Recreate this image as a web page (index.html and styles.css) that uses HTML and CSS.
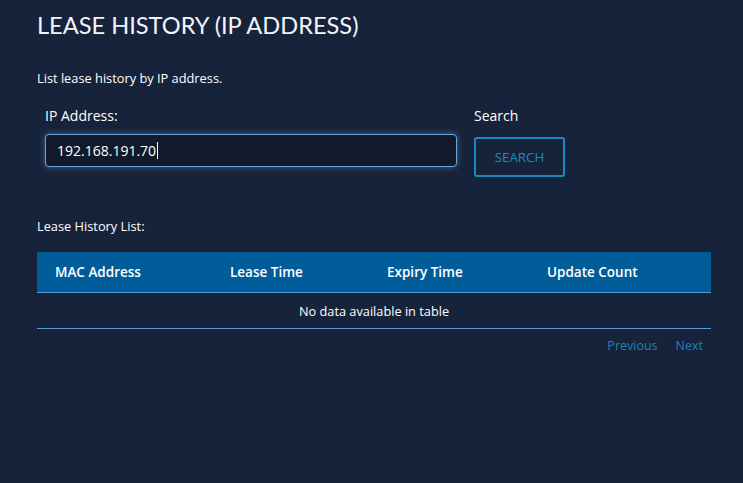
FILE: index.html
```html
<!DOCTYPE html>
<html>
<head>
<meta charset="utf-8">
<link rel="stylesheet" href="styles.css">
</head>
<body>
<div class="page">
  <h1 class="title">LEASE HISTORY (IP ADDRESS)</h1>
  <p class="desc">List lease history by IP address.</p>
  <div class="form-row">
    <div class="group group-ip">
      <label class="label">IP Address:</label>
      <div class="input">192.168.191.70<span class="caret"></span></div>
    </div>
    <div class="group group-search">
      <label class="label">Search</label>
      <button class="btn">SEARCH</button>
    </div>
  </div>
  <p class="list-label">Lease History List:</p>
  <table class="table">
    <thead>
      <tr>
        <th class="c1">MAC Address</th>
        <th class="c2">Lease Time</th>
        <th class="c3">Expiry Time</th>
        <th class="c4">Update Count</th>
      </tr>
    </thead>
    <tbody>
      <tr><td colspan="4" class="empty">No data available in table</td></tr>
    </tbody>
  </table>
  <div class="pager">
    <a class="pg">Previous</a>
    <a class="pg">Next</a>
  </div>
</div>
</body>
</html>
```
FILE: styles.css
```css
html, body {
  margin: 0;
  padding: 0;
  background: #17233a;
  color: #ffffff;
  font-family: "Open Sans", "Liberation Sans", sans-serif;
}
.page {
  padding: 11px 32px 0 37px;
  width: 674px;
}
.title {
  margin: 0;
  font-family: Lato, "Open Sans", sans-serif;
  font-weight: 400;
  font-size: 23.6px;
  line-height: 29px;
  color: #f2f4f7;
}
.desc {
  margin: 30px 0 0;
  font-size: 12.8px;
  line-height: 16px;
}
.form-row {
  display: flex;
  margin-top: 20px;
  padding-left: 8px;
}
.group {
  display: flex;
  flex-direction: column;
}
.group-ip {
  width: 412px;
  margin-right: 17px;
}
.label {
  font-size: 14px;
  line-height: 20px;
  display: block;
  margin-bottom: 8px;
}
.input {
  box-sizing: border-box;
  height: 33px;
  width: 412px;
  border: 1px solid #6aa5e0;
  border-radius: 4px;
  background: #101a2b;
  box-shadow: 0 0 6px rgba(90, 160, 230, 0.55);
  padding: 0 11px;
  font-size: 14px;
  line-height: 31px;
  color: #fff;
  display: flex;
  align-items: center;
}
.caret {
  display: inline-block;
  width: 1px;
  height: 17px;
  background: #fff;
  margin-left: 1px;
}
.btn {
  box-sizing: border-box;
  margin-top: 3px;
  width: 91px;
  height: 40px;
  border: 2px solid #1a8bb8;
  border-radius: 3px;
  background: transparent;
  color: #1f8ab8;
  font-family: "Open Sans", "Liberation Sans", sans-serif;
  font-size: 13.3px;
  padding: 0;
}
.list-label {
  margin: 41px 0 0;
  font-size: 12.8px;
  line-height: 16px;
}
.table {
  margin-top: 18px;
  width: 674px;
  border-collapse: collapse;
  table-layout: fixed;
}
.table th {
  background: #015d99;
  height: 40px;
  padding: 0 0 0 18px;
  text-align: left;
  font-size: 13.5px;
  font-weight: 600;
  border-bottom: 1px solid #5b9bd5;
  color: #fff;
}
.c1 { width: 157px; }
.c2 { width: 139px; }
.c3 { width: 142px; }
.c4 { width: 164px; }
.empty {
  height: 35px;
  padding: 0;
  text-align: center;
  font-size: 12.75px;
  border-bottom: 1px solid #5b9bd5;
}
.pager {
  display: flex;
  justify-content: flex-end;
  gap: 18px;
  padding: 8px 8px 0 0;
}
.pg {
  font-size: 12.5px;
  line-height: 18px;
  color: #1c82b9;
}
```
